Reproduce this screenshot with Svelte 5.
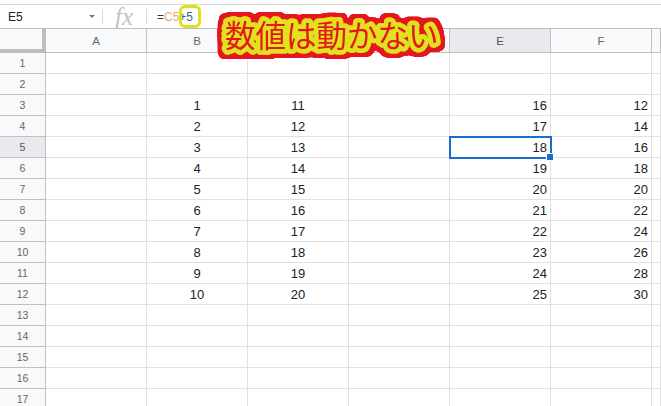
<script>
  // C and D headers sit under the sticker in the screenshot, so they stay blank
  const columns = ['A', 'B', '', '', 'E', 'F', ''];
  const values = {
    3: [1, 11, 16, 12],
    4: [2, 12, 17, 14],
    5: [3, 13, 18, 16],
    6: [4, 14, 19, 18],
    7: [5, 15, 20, 20],
    8: [6, 16, 21, 22],
    9: [7, 17, 22, 24],
    10: [8, 18, 23, 26],
    11: [9, 19, 24, 28],
    12: [10, 20, 25, 30]
  };
  const rows = Array.from({ length: 17 }, (_, i) => i + 1);
</script>

<div class="sheet">
  <div class="formula-bar">
    <div class="name-box">
      <span>E5</span>
      <span class="caret"></span>
    </div>
    <div class="fx">fx</div>
    <div class="formula">
      =<span class="ref">C5</span><span class="rest">+5</span>
      <span class="ring"></span>
    </div>
  </div>

  <div class="grid">
    <div class="corner"></div>
    {#each columns as col}
      <div class="col-head" class:active={col === 'E'}>{col}</div>
    {/each}

    {#each rows as r}
      <div class="row-head" class:active={r === 5}>{r}</div>
      <div class="cell"></div>
      <div class="cell center">{values[r]?.[0] ?? ''}</div>
      <div class="cell center">{values[r]?.[1] ?? ''}</div>
      <div class="cell"></div>
      <div class="cell right" class:selected={r === 5}>
        {values[r]?.[2] ?? ''}
        {#if r === 5}<span class="handle"></span>{/if}
      </div>
      <div class="cell right">{values[r]?.[3] ?? ''}</div>
      <div class="cell"></div>
    {/each}
  </div>

  <svg class="sticker" width="240" height="56" viewBox="0 0 240 56">
    <defs>
      <!-- red rim around the yellow stroke -->
      <filter id="rim" x="-5%" y="-30%" width="110%" height="160%">
        <feMorphology in="SourceAlpha" operator="dilate" radius="3.5" result="fat" />
        <feGaussianBlur in="fat" stdDeviation="1" result="soft" />
        <feComponentTransfer in="soft" result="edge">
          <feFuncA type="linear" slope="6" intercept="-2" />
        </feComponentTransfer>
        <feFlood flood-color="#e5191c" />
        <feComposite in2="edge" operator="in" result="red" />
        <feMerge>
          <feMergeNode in="red" />
          <feMergeNode in="SourceGraphic" />
        </feMerge>
      </filter>
    </defs>
    <text x="11" y="38.5" filter="url(#rim)">数値は動かない</text>
  </svg>
</div>

<style>
  :global(body) {
    margin: 0;
    background: #fff;
    overflow: hidden;
  }

  .sheet {
    position: relative;
    width: 661px;
    height: 406px;
    overflow: hidden;
    font-family: "Liberation Sans", Arial, sans-serif;
    color: #222;
  }

  .formula-bar {
    display: flex;
    align-items: center;
    height: 23px;
    margin-top: 4px;
    border-top: 1px solid #dadada;
    box-sizing: content-box;
  }

  .name-box {
    display: flex;
    align-items: center;
    justify-content: space-between;
    box-sizing: border-box;
    width: 103px;
    height: 15px;
    padding: 0 7px 0 8px;
    border-right: 1px solid #dadada;
    font-size: 12px;
  }

  .caret {
    width: 0;
    height: 0;
    border-left: 3px solid transparent;
    border-right: 3px solid transparent;
    border-top: 3px solid #777;
  }

  .fx {
    box-sizing: border-box;
    width: 44px;
    height: 15px;
    line-height: 15px;
    padding-left: 12px;
    border-right: 1px solid #dadada;
    font-family: "Liberation Serif", serif;
    font-style: italic;
    font-size: 25px;
    color: #c4c4c4;
  }

  .formula {
    position: relative;
    padding-left: 10px;
    font-size: 12px;
    color: #333;
  }

  .ref {
    color: #e8a878;
  }

  .rest {
    color: #4a5f96;
  }

  .ring {
    position: absolute;
    left: 32px;
    top: -5px;
    width: 16px;
    height: 17px;
    border: 3px solid #dfe01c;
    border-radius: 6px;
  }

  .grid {
    display: grid;
    grid-template-columns: 46px repeat(6, 101px) 9px;
    grid-auto-rows: 21px;
    grid-template-rows: 24px;
    border-top: 1px solid #bdbdbd;
  }

  .corner {
    box-sizing: border-box;
    background: #f8f9fa;
    border-right: 4px solid #bdbdbd;
    border-bottom: 4px solid #bdbdbd;
  }

  .col-head,
  .row-head {
    box-sizing: border-box;
    display: flex;
    align-items: center;
    justify-content: center;
    background: #f8f9fa;
    color: #666;
    font-size: 11.5px;
    border-right: 1px solid #c0c0c0;
    border-bottom: 1px solid #c0c0c0;
  }

  .row-head {
    font-size: 10.5px;
  }

  .col-head.active,
  .row-head.active {
    background: #e8eaed;
    color: #555;
  }

  .cell {
    position: relative;
    box-sizing: border-box;
    display: flex;
    align-items: center;
    padding: 1px 3px 0;
    border-right: 1px solid #e1e1e1;
    border-bottom: 1px solid #e1e1e1;
    font-size: 13px;
    color: #222;
  }

  .center {
    justify-content: center;
  }

  .right {
    justify-content: flex-end;
  }

  .selected {
    outline: 2px solid #1a6dd0;
    outline-offset: -1px;
    z-index: 1;
  }

  .handle {
    position: absolute;
    right: -4px;
    bottom: -4px;
    width: 6px;
    height: 6px;
    background: #1a6dd0;
    border: 1px solid #fff;
  }

  .sticker {
    position: absolute;
    left: 214px;
    top: 8px;
    z-index: 2;
    font-family: "Noto Sans CJK JP", sans-serif;
    font-size: 30.5px;
  }

  .sticker text {
    fill: #e5191c;
    stroke: #dfe21a;
    stroke-width: 9px;
    stroke-linejoin: round;
    paint-order: stroke fill;
  }
</style>
